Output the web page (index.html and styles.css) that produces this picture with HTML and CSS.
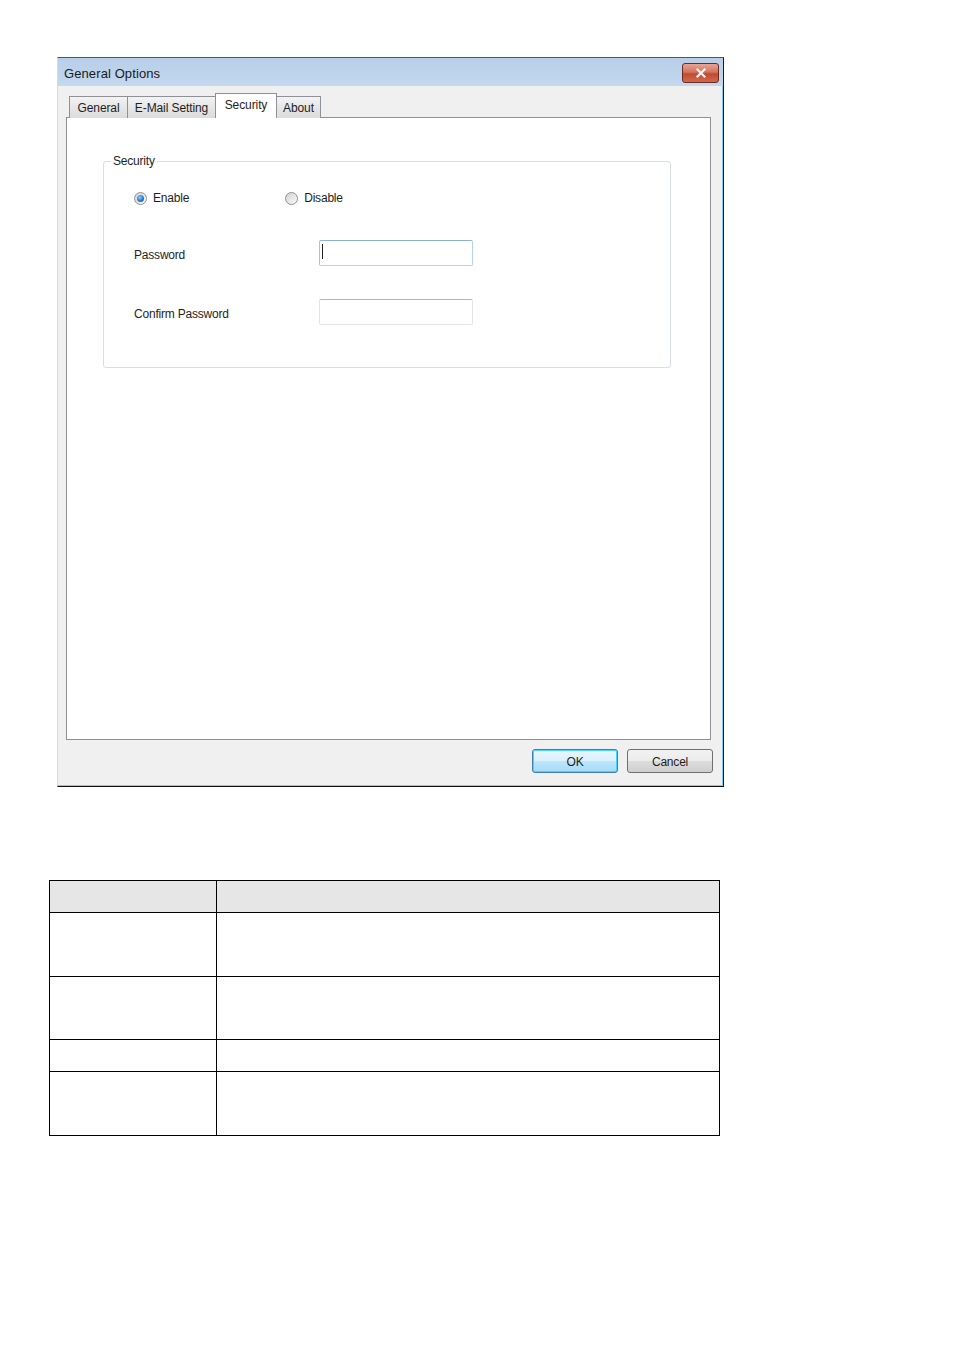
FILE: index.html
```html
<!DOCTYPE html>
<html lang="en">
<head>
    <meta charset="UTF-8">
    <title>General Options</title>
    <link rel="stylesheet" href="styles.css">
</head>
<body>

<div class="page">
    <!-- Dialog -->
    <div class="dialog">
        <div class="titlebar">
            <span class="title">General Options</span>
            <span class="close-btn">
                <svg width="14" height="10" viewBox="0 0 14 10">
                    <path d="M3.5 1.5 L10.5 8.5 M10.5 1.5 L3.5 8.5" stroke="#f4f4f4" stroke-width="2.2" stroke-linecap="square"/>
                </svg>
            </span>
        </div>

        <div class="dialog-body">
            <div class="tabs">
                <div class="tab tab-general">General</div>
                <div class="tab tab-mail">E-Mail Setting</div>
                <div class="tab tab-security selected">Security</div>
                <div class="tab tab-about">About</div>
            </div>

            <div class="panel">
                <fieldset class="group">
                    <legend>Security</legend>

                    <div class="radio-row">
                        <label class="radio-item">
                            <span class="radio checked"></span>Enable
                        </label>
                        <label class="radio-item second">
                            <span class="radio"></span>Disable
                        </label>
                    </div>

                    <div class="field-row first">
                        <span class="field-label">Password</span>
                        <div class="textbox focused"><span class="caret"></span></div>
                    </div>

                    <div class="field-row">
                        <span class="field-label">Confirm Password</span>
                        <div class="textbox"></div>
                    </div>
                </fieldset>
            </div>

            <div class="footer">
                <button class="btn btn-default">OK</button>
                <button class="btn">Cancel</button>
            </div>
        </div>
    </div>

    <!-- Tabelle -->
    <table class="grid">
        <tr class="head"><td class="c1"></td><td></td></tr>
        <tr class="tall"><td></td><td></td></tr>
        <tr class="tall2"><td></td><td></td></tr>
        <tr class="short"><td></td><td></td></tr>
        <tr class="tall"><td></td><td></td></tr>
    </table>
</div>

</body>
</html>
```

FILE: styles.css
```css
body {
    margin: 0;
    background-color: #fff;
    font-family: "Liberation Sans", Arial, sans-serif;
    color: #1e1e1e;
}

.page {
    padding: 57px 0 0 49px;
}

/* Dialog window */
.dialog {
    box-sizing: border-box;
    width: 667px;
    height: 730px;
    margin-left: 8px;
    border-top: 1px solid #555;
    border-right: 1px solid #1c1c1c;
    border-bottom: 1px solid #111;
    border-left: 1px solid #cfdcec;
    box-shadow: inset -1px -1px 0 #86c9ea;
    background-color: #f0f0f0;
    display: flex;
    flex-direction: column;
}

.titlebar {
    height: 28px;
    display: flex;
    align-items: center;
    justify-content: space-between;
    padding: 0 4px 0 6px;
    background: linear-gradient(#b9cfe8, #bed4ec 60%, #c4d8ee);
}

.title {
    font-size: 13px;
    color: #1a1a1a;
    letter-spacing: 0.1px;
    margin-top: 2px;
}

.close-btn {
    box-sizing: border-box;
    width: 37px;
    height: 20px;
    margin-top: 1px;
    border: 1px solid #6d2a22;
    border-radius: 3px;
    background: linear-gradient(#e7a593, #d5735d 45%, #c24a33 55%, #cf6a4d);
    display: flex;
    align-items: center;
    justify-content: center;
}

.dialog-body {
    flex: 1;
    padding: 8px 0 0 8px;
}

/* Tabs */
.tabs {
    height: 24px;
    display: flex;
    align-items: flex-end;
    padding-left: 3px;
    margin-bottom: -1px;
    position: relative;
    z-index: 1;
}

.tab {
    box-sizing: border-box;
    height: 22px;
    border: 1px solid #8e9197;
    border-bottom: none;
    border-right: none;
    background: linear-gradient(#f3f3f3, #e6e6e6 50%, #dcdcdc);
    font-size: 12px;
    letter-spacing: -0.1px;
    text-align: center;
    line-height: 23px;
}

.tab-general { width: 58px; }
.tab-mail { width: 88px; }
.tab-security { width: 62px; }
.tab-about { width: 44px; border-right: 1px solid #8e9197; }

.tab.selected {
    height: 25px;
    line-height: 23px;
    background: #fff;
    border-right: 1px solid #8e9197;
}

.tab.selected + .tab {
    border-left: none;
}

.panel {
    box-sizing: border-box;
    width: 645px;
    height: 623px;
    border: 1px solid #8e9197;
    background-color: #fff;
    padding: 36px 0 0 36px;
}

/* Group box */
.group {
    box-sizing: border-box;
    width: 568px;
    height: 214px;
    margin: 0;
    padding: 0 0 0 30px;
    border: 1px solid #d5dfe5;
    border-radius: 3px;
    font-size: 12px;
    letter-spacing: -0.2px;
}

.group legend {
    padding: 0 2px;
    margin-left: -23px;
    line-height: 14px;
}

.radio-row {
    display: flex;
    align-items: center;
    height: 16px;
    margin-top: 22px;
}

.radio-item {
    display: flex;
    align-items: center;
    gap: 6px;
}

.radio-item.second {
    margin-left: 96px;
}

.radio {
    box-sizing: border-box;
    width: 13px;
    height: 13px;
    border-radius: 50%;
    border: 1px solid #8f9192;
    background: linear-gradient(135deg, #d2d2d2, #fafafa);
    display: flex;
    align-items: center;
    justify-content: center;
}

.radio.checked::after {
    content: "";
    width: 7px;
    height: 7px;
    border-radius: 50%;
    background: radial-gradient(circle at 40% 35%, #8fd0f7, #2a7ac6 55%, #18508f);
}

.field-row {
    display: flex;
    align-items: center;
    margin-top: 33px;
}

.field-row.first {
    margin-top: 34px;
}

.field-label {
    width: 185px;
    padding-top: 3px;
}

.textbox {
    box-sizing: border-box;
    width: 154px;
    height: 26px;
    border: 1px solid #e2e3ea;
    border-top-color: #b5b6bb;
    border-radius: 2px;
    background: #fff;
    padding: 3px 0 0 2px;
}

.textbox.focused {
    border-color: #b5d3ec;
    border-top-color: #8cb1d6;
    border-left-color: #a4c4e2;
}

.caret {
    display: block;
    width: 1px;
    height: 15px;
    background-color: #222;
}

/* Buttons */
.footer {
    display: flex;
    justify-content: flex-end;
    gap: 9px;
    padding: 9px 10px 0 0;
}

.btn {
    box-sizing: border-box;
    width: 86px;
    height: 24px;
    border: 1px solid #707070;
    border-radius: 3px;
    background: linear-gradient(#f2f2f2, #ebebeb 50%, #dddddd 50%, #cfcfcf);
    font-family: "Liberation Sans", Arial, sans-serif;
    font-size: 12px;
    letter-spacing: -0.2px;
    color: #1e1e1e;
    padding: 1px 0 0;
}

.btn-default {
    border-color: #3c7fb1;
    background: linear-gradient(#eaf6fd, #d9f0fc 50%, #bee6fd 50%, #a7d9f5);
    box-shadow: inset 0 0 0 1px #48d5fc;
}

/* Tabelle */
.grid {
    margin-top: 93px;
    width: 671px;
    border-collapse: collapse;
    table-layout: fixed;
}

.grid td {
    border: 1px solid #000;
    padding: 0;
}

.grid .c1 {
    width: 166px;
}

.grid .head td {
    height: 31px;
    background-color: #e6e6e6;
}

.grid .tall td { height: 63px; }
.grid .tall2 td { height: 62px; }
.grid .short td { height: 31px; }
```
